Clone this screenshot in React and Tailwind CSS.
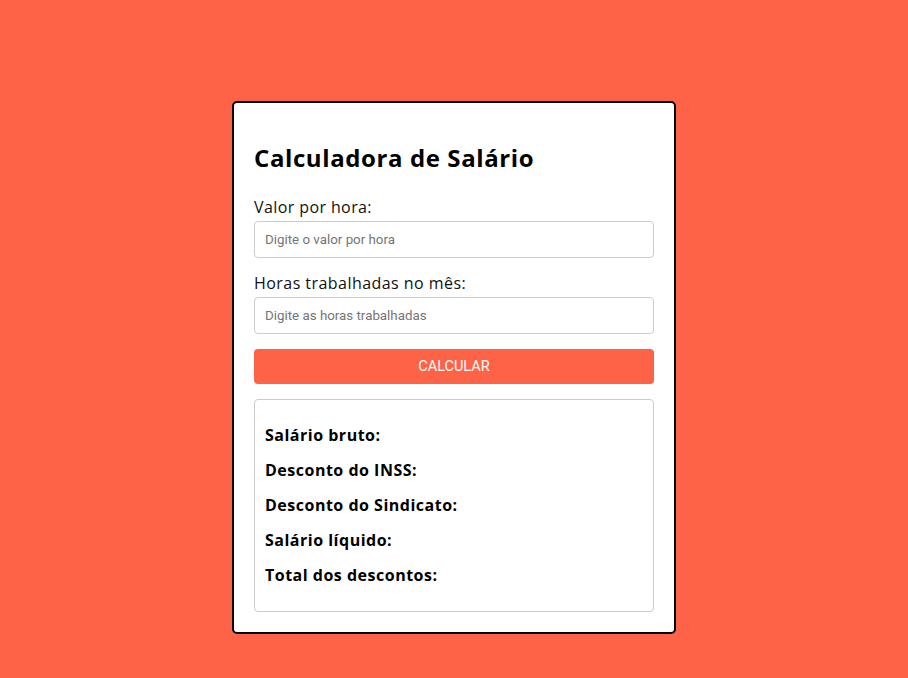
export default function App() {
  const rows = ["Salário bruto:", "Desconto do INSS:", "Desconto do Sindicato:", "Salário líquido:", "Total dos descontos:"];
  return (
    <div className="min-h-[678px] w-full bg-[#ff6347] pt-[101px]" style={{ fontFamily: '"Open Sans", sans-serif' }}>
      <div className="mx-auto w-[444px] rounded-[5px] border-2 border-black bg-white px-5 pb-5 pt-5">
        <h2 className="mt-[20px] h-[29px] text-[24px] font-bold leading-[29px] tracking-[0.6px] text-black">Calculadora de Salário</h2>
        <label className="mt-[26px] block text-[16px] leading-[19px] tracking-[0.4px] text-[#111]">Valor por hora:</label>
        <input
          className="mt-[4px] block h-[37px] w-full rounded-[4px] border border-[#ccc] px-[10px] text-[13.33px] outline-none placeholder:text-[#757575]"
          style={{ fontFamily: 'Roboto, sans-serif' }}
          placeholder="Digite o valor por hora"
        />
        <label className="mt-[16px] block text-[16px] leading-[19px] tracking-[0.45px] text-[#111]">Horas trabalhadas no mês:</label>
        <input
          className="mt-[4px] block h-[37px] w-full rounded-[4px] border border-[#ccc] px-[10px] text-[13.33px] outline-none placeholder:text-[#757575]"
          style={{ fontFamily: 'Roboto, sans-serif' }}
          placeholder="Digite as horas trabalhadas"
        />
        <button
          className="mt-[15px] block h-[35px] w-full rounded-[4px] bg-[#ff6347] text-[14.5px] text-white"
          style={{ fontFamily: 'Roboto, sans-serif' }}
        >
          CALCULAR
        </button>
        <div className="mt-[15px] rounded-[4px] border border-[#ccc] px-[10px] py-[10px]">
          {rows.map((r) => (
            <p key={r} className="my-4 text-[16px] font-bold leading-[19px] tracking-[0.5px] text-black">{r}</p>
          ))}
        </div>
      </div>
    </div>
  );
}
